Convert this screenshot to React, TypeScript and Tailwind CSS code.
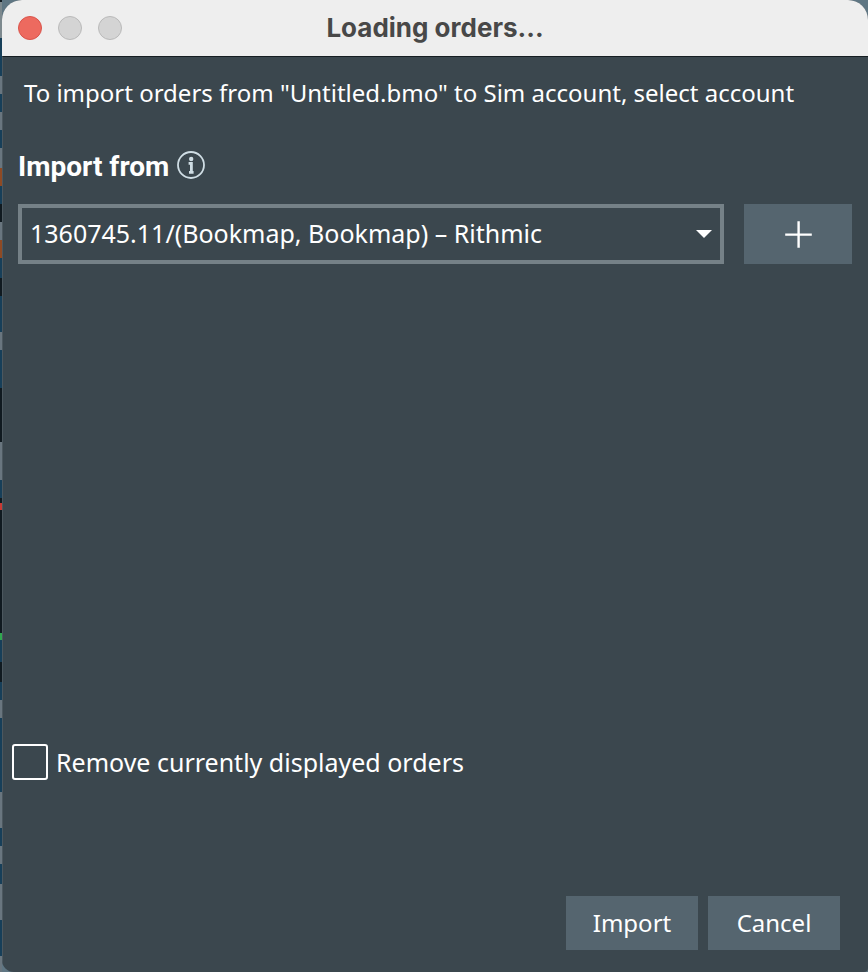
import { useState } from 'react';

interface Stripe {
  size: number;
  color: string;
}

const GRAY = '#69767f';
const NAVY = '#173f59';
const BLACK = '#101a20';
const ORANGE = '#8f4a24';

// sliver of the chart window that shows behind the dialog
const stripes: Stripe[] = [
  { size: 2, color: BLACK },
  { size: 36, color: '#7d898e' },
  { size: 38, color: NAVY },
  { size: 18, color: GRAY },
  { size: 18, color: NAVY },
  { size: 18, color: GRAY },
  { size: 18, color: NAVY },
  { size: 20, color: GRAY },
  { size: 18, color: ORANGE },
  { size: 18, color: NAVY },
  { size: 18, color: BLACK },
  { size: 18, color: GRAY },
  { size: 18, color: ORANGE },
  { size: 20, color: NAVY },
  { size: 18, color: BLACK },
  { size: 36, color: NAVY },
  { size: 18, color: GRAY },
  { size: 38, color: NAVY },
  { size: 54, color: BLACK },
  { size: 38, color: GRAY },
  { size: 18, color: NAVY },
  { size: 5, color: BLACK },
  { size: 7, color: '#c93a34' },
  { size: 123, color: BLACK },
  { size: 7, color: '#2fa84f' },
  { size: 22, color: NAVY },
  { size: 20, color: BLACK },
  { size: 18, color: NAVY },
  { size: 18, color: GRAY },
  { size: 74, color: NAVY },
  { size: 36, color: GRAY },
  { size: 18, color: NAVY },
  { size: 18, color: GRAY },
  { size: 20, color: NAVY },
  { size: 36, color: GRAY },
  { size: 36, color: NAVY },
  { size: 16, color: GRAY },
];

const accounts = ['1360745.11/(Bookmap, Bookmap) – Rithmic'];

function Backdrop() {
  return (
    <div className="flex w-[2px] shrink-0 flex-col" aria-hidden="true">
      {stripes.map((stripe, index) => (
        <div key={index} style={{ flexGrow: stripe.size, backgroundColor: stripe.color }} />
      ))}
    </div>
  );
}

function TitleBar() {
  return (
    <header className="grid h-14 shrink-0 grid-cols-[1fr_auto_1fr] items-center bg-[#eeeeee] px-4">
      <div className="flex gap-4">
        <button type="button" aria-label="Close" className="size-6 rounded-full border border-[#d9544b] bg-[#ed6a5f]" />
        <button type="button" aria-label="Minimize" disabled className="size-6 rounded-full border border-[#b9b9b9] bg-[#d4d4d4]" />
        <button type="button" aria-label="Zoom" disabled className="size-6 rounded-full border border-[#b9b9b9] bg-[#d4d4d4]" />
      </div>
      <h1 className="font-['Inter',sans-serif] text-[26px] leading-8 font-bold text-[#484848]">Loading orders...</h1>
    </header>
  );
}

function InfoIcon() {
  return (
    <svg viewBox="0 0 28 28" className="size-7" fill="none" stroke="#cfdde4" aria-hidden="true">
      <circle cx="14" cy="14" r="13" strokeWidth="1.8" />
      <circle cx="14.2" cy="8" r="2.2" fill="#cfdde4" stroke="none" />
      <path d="M11.6 12.4h2.8v8.4M12 21.4h4.6" strokeWidth="2.8" />
    </svg>
  );
}

export default function App() {
  const [account, setAccount] = useState(accounts[0]);
  const [removeOrders, setRemoveOrders] = useState(false);

  return (
    <div className="flex min-h-screen bg-[#5f7683] font-['Noto_Sans',sans-serif] text-2xl text-white">
      <Backdrop />
      <main className="flex flex-1 flex-col overflow-hidden rounded-t-[20px] rounded-br-sm rounded-bl-xl bg-[#3b474e]">
        <TitleBar />
        <form className="flex flex-1 flex-col border-t border-l border-t-[#161e22] border-l-[#4c585f]" onSubmit={e => e.preventDefault()}>
          <p className="mt-5 px-[21px] leading-8">
            To import orders from "Untitled.bmo" to Sim account, select account
          </p>

          <div className="mt-10 flex items-center gap-2 px-[15px]">
            <label htmlFor="account" className="font-['Roboto',sans-serif] text-[28px] leading-9 font-bold">
              Import from
            </label>
            <button type="button" aria-label="About importing" className="pb-1">
              <InfoIcon />
            </button>
          </div>

          <div className="mt-[19px] flex gap-5 pr-4 pl-[15px]">
            <div className="relative flex-1">
              <select
                id="account"
                value={account}
                onChange={e => setAccount(e.target.value)}
                className="h-15 w-full appearance-none border-4 border-[#758187] bg-[#3b474e] pl-2 text-[25px] outline-none"
              >
                {accounts.map(name => (
                  <option key={name}>{name}</option>
                ))}
              </select>
              <svg viewBox="0 0 16 8" className="pointer-events-none absolute top-[26px] right-3 h-2 w-4" aria-hidden="true">
                <path d="M0 0h16L8 8z" fill="#fff" />
              </svg>
            </div>
            <button type="button" aria-label="Add account" className="flex h-15 w-27 items-center justify-center bg-[#55656f]">
              <svg viewBox="0 0 28 28" className="size-7" stroke="#fff" strokeWidth="2.4" aria-hidden="true">
                <path d="M14.6 1.2v26.6M1.2 14.6h26.6" />
              </svg>
            </button>
          </div>

          <div className="mt-auto flex items-center gap-2 px-[9px]">
            <input
              id="remove-orders"
              type="checkbox"
              checked={removeOrders}
              onChange={e => setRemoveOrders(e.target.checked)}
              className="size-9 appearance-none rounded-[3px] border-2 border-white checked:bg-[#55656f]"
            />
            <label htmlFor="remove-orders" className="text-[25px] leading-8">
              Remove currently displayed orders
            </label>
          </div>

          <div className="mt-29 mb-[22px] flex justify-end gap-2.5 pr-7">
            <button type="submit" className="h-[54px] w-33 bg-[#55656f]">Import</button>
            <button type="button" className="h-[54px] w-33 bg-[#55656f]">Cancel</button>
          </div>
        </form>
      </main>
    </div>
  );
}
